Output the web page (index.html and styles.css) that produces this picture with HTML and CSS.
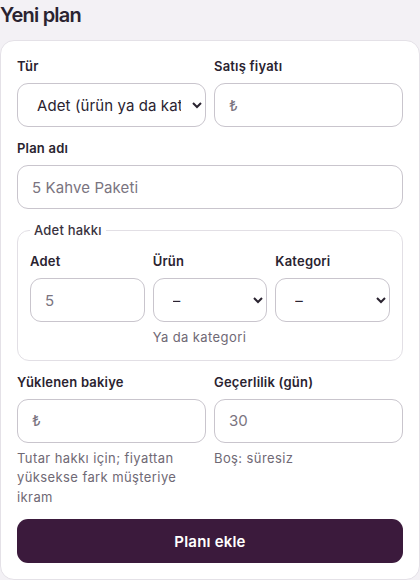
FILE: index.html
```html
<!DOCTYPE html>
<html lang="tr">
  <head>
    <meta charset="UTF-8" />
    <meta name="viewport" content="width=device-width, initial-scale=1.0" />
    <title>Yeni plan</title>
    <link rel="stylesheet" href="styles.css">
  </head>
  <body>
    <h2 class="page-title">Yeni plan</h2>
    <form class="card">
      <div class="row two">
        <div class="field">
          <label>Tür</label>
          <select class="control">
            <option>Adet (ürün ya da kategori)</option>
            <option>Tutar</option>
          </select>
        </div>
        <div class="field">
          <label>Satış fiyatı</label>
          <input class="control" type="text" placeholder="₺" />
        </div>
      </div>

      <div class="field">
        <label>Plan adı</label>
        <input class="control" type="text" placeholder="5 Kahve Paketi" />
      </div>

      <fieldset class="group">
        <legend>Adet hakkı</legend>
        <div class="row three">
          <div class="field">
            <label>Adet</label>
            <input class="control" type="text" placeholder="5" />
          </div>
          <div class="field">
            <label>Ürün</label>
            <select class="control">
              <option>–</option>
            </select>
            <div class="hint">Ya da kategori</div>
          </div>
          <div class="field">
            <label>Kategori</label>
            <select class="control">
              <option>–</option>
            </select>
          </div>
        </div>
      </fieldset>

      <div class="row two">
        <div class="field">
          <label>Yüklenen bakiye</label>
          <input class="control" type="text" placeholder="₺" />
          <div class="hint">Tutar hakkı için; fiyattan yüksekse fark müşteriye ikram</div>
        </div>
        <div class="field">
          <label>Geçerlilik (gün)</label>
          <input class="control" type="text" placeholder="30" />
          <div class="hint">Boş: süresiz</div>
        </div>
      </div>

      <button class="submit" type="button">Planı ekle</button>
    </form>
  </body>
</html>
```

FILE: styles.css
```css
body {
  margin: 0;
  background: #f3f1f5;
  font-family: Inter, "Noto Sans", sans-serif;
  color: #2a2330;
}

.page-title {
  margin: 0;
  height: 40px;
  padding-top: 2px;
  box-sizing: border-box;
  font-size: 20px;
  font-weight: 600;
  letter-spacing: -0.8px;
  line-height: 26px;
}

.card {
  background: #fff;
  border: 1px solid #e4e1e7;
  border-radius: 14px;
  padding: 16px;
  display: flex;
  flex-direction: column;
  gap: 12px;
}

.row {
  display: grid;
  gap: 8px;
}
.row.two {
  grid-template-columns: 1fr 1fr;
}
.row.three {
  grid-template-columns: 1fr 1fr 1fr;
}

.field {
  display: flex;
  flex-direction: column;
  min-width: 0;
}

.field label {
  font-size: 13px;
  font-weight: 600;
  line-height: 18px;
  margin-bottom: 8px;
  letter-spacing: 0.2px;
}

.control {
  box-sizing: border-box;
  height: 44px;
  width: 100%;
  border: 1px solid #c9c5cd;
  border-radius: 11px;
  background: #fff;
  padding: 0 14px;
  font-family: inherit;
  font-size: 15px;
  color: #2a2330;
  letter-spacing: 0.1px;
}
select.control {
  padding: 0 8px 0 15px;
}
.control::placeholder {
  color: #7a7480;
}

.hint {
  margin-top: 6px;
  font-size: 13px;
  line-height: 19.5px;
  color: #6f6975;
  letter-spacing: 0.4px;
}

.group {
  margin: 0;
  border: 1px solid #e2dfe5;
  border-radius: 12px;
  padding: 13px 12px 12px;
}
.group legend {
  font-size: 13px;
  font-weight: 500;
  line-height: 18px;
  padding: 0 4px;
  margin-left: 0;
  color: #3a3340;
  letter-spacing: 0.2px;
}

.submit {
  height: 44px;
  border: none;
  border-radius: 11px;
  background: #3b1a3c;
  color: #fff;
  font-family: inherit;
  font-size: 15px;
  font-weight: 600;
  letter-spacing: 0.2px;
}
```
